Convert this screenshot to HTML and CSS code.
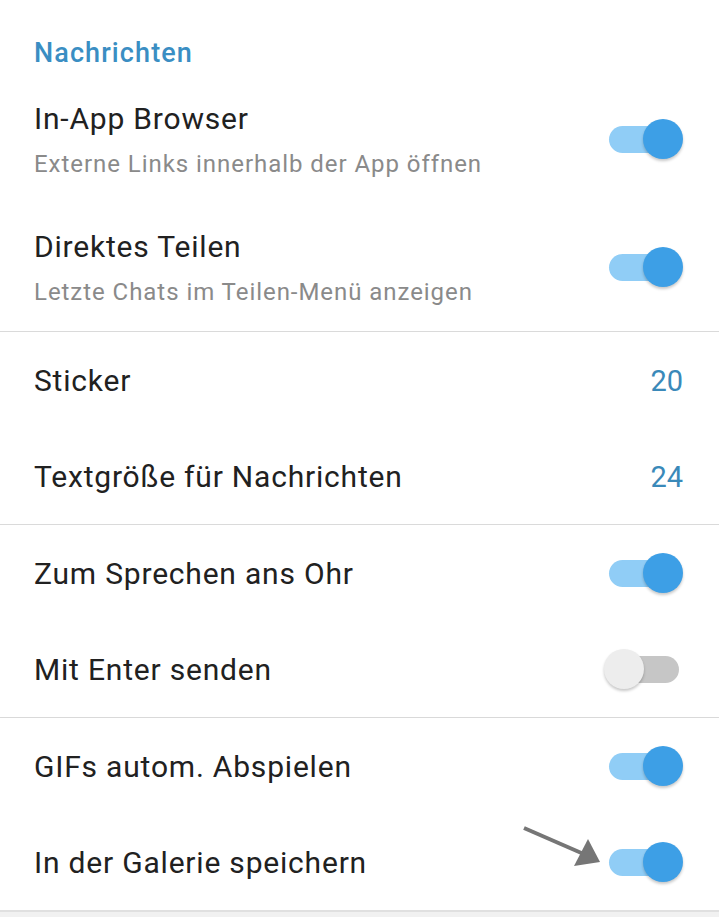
FILE: index.html
```html
<!DOCTYPE html>
<html lang="de">
<head>
  <meta charset="UTF-8">
  <title>Nachrichten</title>
  <link rel="stylesheet" href="styles.css">
</head>
<body>

  <div class="einstellungen">
    <h2 class="kopf">Nachrichten</h2>

    <div class="zeile doppelt">
      <div class="text">
        <div class="titel">In-App Browser</div>
        <div class="info">Externe Links innerhalb der App öffnen</div>
      </div>
      <span class="schalter an"><span class="spur"></span><span class="knopf"></span></span>
    </div>

    <div class="zeile doppelt">
      <div class="text">
        <div class="titel">Direktes Teilen</div>
        <div class="info">Letzte Chats im Teilen-Menü anzeigen</div>
      </div>
      <span class="schalter an"><span class="spur"></span><span class="knopf"></span></span>
    </div>
  </div>

  <div class="einstellungen">
    <div class="zeile">
      <div class="titel">Sticker</div>
      <span class="wert">20</span>
    </div>
    <div class="zeile">
      <div class="titel">Textgröße für Nachrichten</div>
      <span class="wert">24</span>
    </div>
  </div>

  <div class="einstellungen">
    <div class="zeile">
      <div class="titel">Zum Sprechen ans Ohr</div>
      <span class="schalter an"><span class="spur"></span><span class="knopf"></span></span>
    </div>
    <div class="zeile">
      <div class="titel">Mit Enter senden</div>
      <span class="schalter"><span class="spur"></span><span class="knopf"></span></span>
    </div>
  </div>

  <div class="einstellungen letzte">
    <div class="zeile">
      <div class="titel">GIFs autom. Abspielen</div>
      <span class="schalter an"><span class="spur"></span><span class="knopf"></span></span>
    </div>
    <div class="zeile">
      <div class="titel">In der Galerie speichern</div>
      <span class="schalter an"><span class="spur"></span><span class="knopf"></span></span>
      <svg class="pfeil" width="90" height="50" viewBox="0 0 90 50">
        <line x1="4" y1="4" x2="66" y2="31" stroke="#767676" stroke-width="4"/>
        <polygon points="80,38 68,15 54,42" fill="#767676"/>
      </svg>
    </div>
  </div>

</body>
</html>
```

FILE: styles.css
```css
* { box-sizing: border-box; }
body {
  font-family: Roboto, 'Noto Sans', sans-serif;
  background: #f1f1f1;
  margin: 0;
  color: #212121;
}

.einstellungen {
  background: #fff;
  border-bottom: 1px solid #dadada;
}

.einstellungen.letzte {
  border-bottom: 2px solid #e0e0e0;
  box-shadow: 0 1px 2px rgba(0,0,0,0.06);
}

.kopf {
  margin: 0;
  padding: 37px 34px 6px;
  height: 75px;
  font-size: 27px;
  line-height: 32px;
  letter-spacing: 1.1px;
  font-weight: 500;
  color: #3a8ec3;
}

.zeile {
  position: relative;
  display: flex;
  align-items: center;
  justify-content: space-between;
  height: 96px;
  padding: 2px 36px 0 34px;
}

.zeile.doppelt {
  height: 128px;
  padding-top: 0;
}

.titel {
  font-size: 30px;
  line-height: 36px;
  letter-spacing: 0.8px;
}

.info {
  margin-top: 11px;
  font-size: 24px;
  line-height: 32px;
  letter-spacing: 0.95px;
  color: #8a8a8a;
}

.doppelt .text {
  margin-top: 2px;
}

.wert {
  font-size: 29px;
  color: #3a89b9;
}

.schalter {
  position: relative;
  width: 79px;
  height: 40px;
  flex-shrink: 0;
}

.zeile .schalter {
  margin-top: -2px;
}

.doppelt .schalter {
  margin-top: 0;
}

.spur {
  position: absolute;
  left: 5px;
  top: 7px;
  width: 70px;
  height: 27px;
  border-radius: 14px;
  background: #c6c6c6;
}

.knopf {
  position: absolute;
  left: 0;
  top: 0;
  width: 40px;
  height: 40px;
  border-radius: 50%;
  background: #ededed;
  box-shadow: 0 2px 3px rgba(0,0,0,0.22);
}

.schalter.an .spur {
  background: #90cdf6;
}

.schalter.an .knopf {
  left: 39px;
  background: #3d9fe6;
}

.pfeil {
  position: absolute;
  left: 520px;
  top: 10px;
}
```
